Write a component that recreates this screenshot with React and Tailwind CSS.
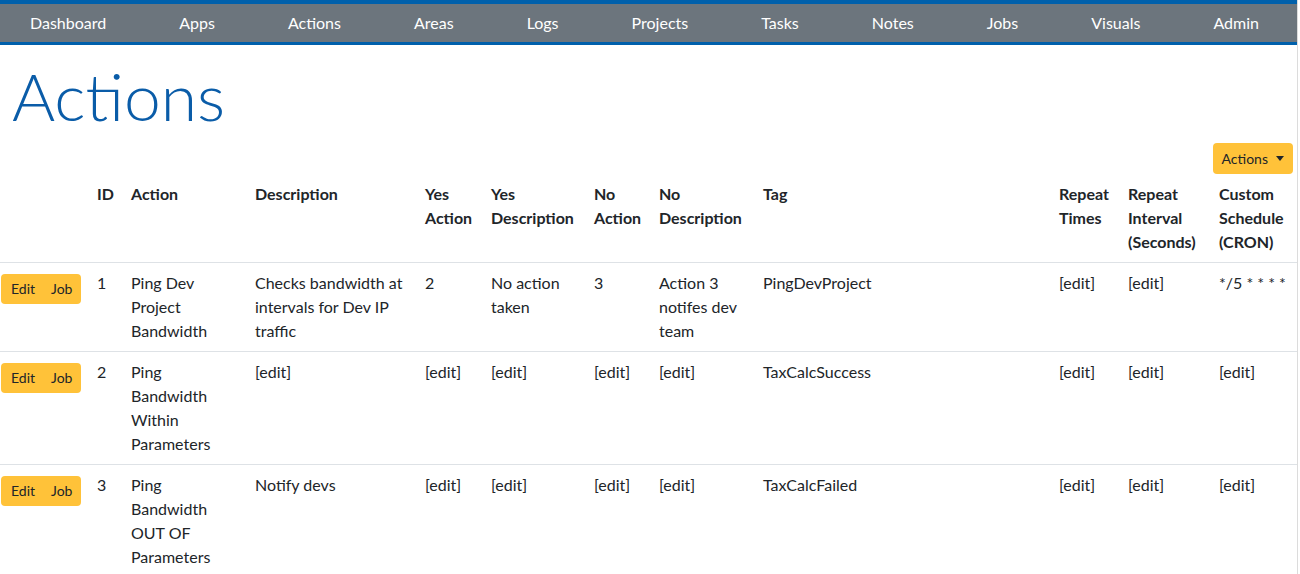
const navItems = [
  "Dashboard",
  "Apps",
  "Actions",
  "Areas",
  "Logs",
  "Projects",
  "Tasks",
  "Notes",
  "Jobs",
  "Visuals",
  "Admin",
];

const columns = [
  { key: "btn", label: "", width: "w-[89px]" },
  { key: "id", label: "ID", width: "w-[34px]" },
  { key: "action", label: "Action", width: "w-[124px]" },
  { key: "description", label: "Description", width: "w-[170px]" },
  { key: "yesAction", label: "Yes Action", width: "w-[66px]" },
  { key: "yesDescription", label: "Yes Description", width: "w-[103px]" },
  { key: "noAction", label: "No Action", width: "w-[65px]" },
  { key: "noDescription", label: "No Description", width: "w-[104px]" },
  { key: "tag", label: "Tag", width: "w-[296px]" },
  { key: "repeatTimes", label: "Repeat Times", width: "w-[69px]" },
  { key: "repeatInterval", label: "Repeat Interval (Seconds)", width: "w-[91px]" },
  { key: "schedule", label: "Custom Schedule (CRON)", width: "w-[86px]" },
];

const rows = [
  {
    id: 1,
    action: "Ping Dev Project Bandwidth",
    description: "Checks bandwidth at intervals for Dev IP traffic",
    yesAction: "2",
    yesDescription: "No action taken",
    noAction: "3",
    noDescription: "Action 3 notifes dev team",
    tag: "PingDevProject",
    repeatTimes: "[edit]",
    repeatInterval: "[edit]",
    schedule: "*/5 * * * *",
  },
  {
    id: 2,
    action: "Ping Bandwidth Within Parameters",
    description: "[edit]",
    yesAction: "[edit]",
    yesDescription: "[edit]",
    noAction: "[edit]",
    noDescription: "[edit]",
    tag: "TaxCalcSuccess",
    repeatTimes: "[edit]",
    repeatInterval: "[edit]",
    schedule: "[edit]",
  },
  {
    id: 3,
    action: "Ping Bandwidth OUT OF Parameters",
    description: "Notify devs",
    yesAction: "[edit]",
    yesDescription: "[edit]",
    noAction: "[edit]",
    noDescription: "[edit]",
    tag: "TaxCalcFailed",
    repeatTimes: "[edit]",
    repeatInterval: "[edit]",
    schedule: "[edit]",
  },
];

export default function App() {
  return (
    <div
      className="w-[1298px] min-h-[574px] bg-white border-r border-[#dcdcdc] text-[#212529] text-[16px] leading-[24px]"
      style={{ fontFamily: "Lato, 'Liberation Sans', sans-serif" }}
    >
      {/* top nav */}
      <nav className="h-[45px] bg-[#6c757d] border-t-[4px] border-b-[3px] border-[#0060ab] flex items-center justify-between pl-[30px] pr-[38px]">
        {navItems.map((item) => (
          <a key={item} href="#" className="text-white text-[16px] leading-[24px] pb-[1px]">
            {item}
          </a>
        ))}
      </nav>

      <h1 className="mt-[8px] ml-[12px] text-[66px] leading-[86px] font-light text-[#0a5ca8]">
        Actions
      </h1>

      <div className="flex justify-end pr-[4px] mt-[4px]">
        <button className="h-[31px] px-[9px] rounded-[4px] bg-[#ffc239] text-[#212529] text-[14px] flex items-center">
          Actions
          <span className="ml-[8px] inline-block w-0 h-0 border-x-[4px] border-x-transparent border-t-[5px] border-t-[#212529]"></span>
        </button>
      </div>

      <table className="table-fixed w-[1297px] border-collapse">
        <colgroup>
          {columns.map((c) => (
            <col key={c.key} className={c.width} />
          ))}
        </colgroup>
        <thead>
          <tr className="border-b border-[#dee2e6]">
            {columns.map((c) => (
              <th key={c.key} className="px-[8px] py-[8px] text-left align-top font-bold">
                {c.label}
              </th>
            ))}
          </tr>
        </thead>
        <tbody>
          {rows.map((r) => (
            <tr key={r.id} className="border-b border-[#dee2e6]">
              <td className="pl-[1px] pr-[8px] py-[8px] align-top">
                <div className="mt-[3px] inline-flex rounded-[4px] bg-[#ffc239] text-[14px] leading-[30px] h-[30px]">
                  <button className="pl-[10px] pr-[8px]">Edit</button>
                  <button className="pl-[8px] pr-[9px]">Job</button>
                </div>
              </td>
              <td className="px-[8px] py-[8px] align-top">{r.id}</td>
              <td className="px-[8px] py-[8px] align-top">{r.action}</td>
              <td className="px-[8px] py-[8px] align-top">{r.description}</td>
              <td className="px-[8px] py-[8px] align-top">{r.yesAction}</td>
              <td className="px-[8px] py-[8px] align-top">{r.yesDescription}</td>
              <td className="px-[8px] py-[8px] align-top">{r.noAction}</td>
              <td className="px-[8px] py-[8px] align-top">{r.noDescription}</td>
              <td className="px-[8px] py-[8px] align-top">{r.tag}</td>
              <td className="px-[8px] py-[8px] align-top">{r.repeatTimes}</td>
              <td className="px-[8px] py-[8px] align-top">{r.repeatInterval}</td>
              <td className="px-[8px] py-[8px] align-top whitespace-nowrap">{r.schedule}</td>
            </tr>
          ))}
        </tbody>
      </table>
    </div>
  );
}
